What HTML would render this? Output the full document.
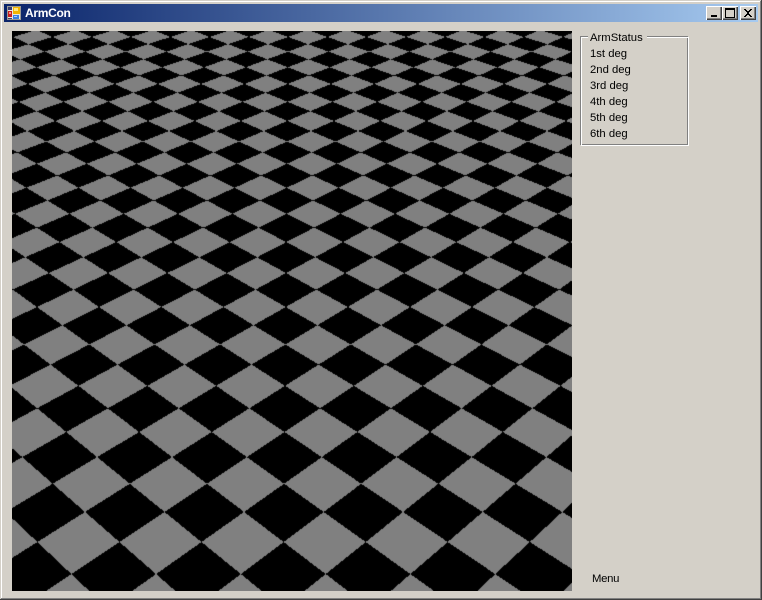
<!DOCTYPE html>
<html>
<head>
<meta charset="utf-8">
<title>ArmCon</title>
<style>
html,body{margin:0;padding:0;width:762px;height:600px;overflow:hidden;background:#d4d0c8}
#win{position:relative;width:762px;height:600px;background:#d4d0c8;overflow:hidden;font-family:"Liberation Sans",sans-serif;color:#000}
.a{position:absolute}
.t{position:absolute;font-size:11.3px;line-height:14px;white-space:nowrap}
.btn{position:absolute;top:6px;width:16px;height:14px;background:#d4d0c8;box-sizing:border-box;box-shadow:inset 1px 1px 0 #fff,inset -1px -1px 0 #404040,inset -2px -2px 0 #808080}
.btn svg{position:absolute;left:0;top:0}
</style>
</head>
<body>
<div id="win">
  <div class="a" style="left:1px;top:1px;width:760px;height:1px;background:#fff"></div>
  <div class="a" style="left:1px;top:1px;width:1px;height:597px;background:#fff"></div>
  <div class="a" style="left:760px;top:1px;width:1px;height:598px;background:#808080"></div>
  <div class="a" style="left:761px;top:0;width:1px;height:600px;background:#404040"></div>
  <div class="a" style="left:1px;top:598px;width:760px;height:1px;background:#808080"></div>
  <div class="a" style="left:0;top:599px;width:762px;height:1px;background:#404040"></div>

  <div class="a" style="left:4px;top:4px;width:754px;height:18px;background:linear-gradient(to right,#0a246a,#a6caf0)"></div>
  <svg class="a" style="left:7px;top:6px" width="14" height="14" viewBox="0 0 14 14" shape-rendering="crispEdges">
    <rect width="14" height="14" fill="#9a9a94"/>
    <rect x="1" y="1" width="12" height="12" fill="#e8e6e0"/>
    <rect x="1" y="1" width="4" height="3" fill="#3a3f6e"/>
    <rect x="6" y="1" width="7" height="7" fill="#f2b400"/>
    <rect x="7" y="2" width="4" height="3" fill="#ffe680"/>
    <rect x="1" y="5" width="4" height="6" fill="#c81e1e"/>
    <rect x="2" y="6" width="2" height="2" fill="#f09090"/>
    <rect x="6" y="9" width="6" height="4" fill="#3a7fe0"/>
    <rect x="7" y="10" width="3" height="1" fill="#a6d0ff"/>
    <rect x="1" y="12" width="4" height="1" fill="#3a3f6e"/>
  </svg>
  <div class="a" style="left:25px;top:6px;font-size:12px;font-weight:bold;line-height:15px;color:#fff;white-space:nowrap;letter-spacing:-0.3px">ArmCon</div>

  <div class="btn" style="left:706px"><svg width="16" height="14" shape-rendering="crispEdges"><rect x="5" y="9" width="6" height="2" fill="#000"/></svg></div>
  <div class="btn" style="left:722px"><svg width="16" height="14" shape-rendering="crispEdges"><path d="M3 2h10v10H3zM4 4v7h8V4z" fill="#000" fill-rule="evenodd"/></svg></div>
  <div class="btn" style="left:740px"><svg width="16" height="14" shape-rendering="crispEdges"><path d="M4 3h2v1h1v1h2V4h1V3h2v1h-1v1h-1v1H9v2h1v1h1v1h1v1h-2v-1H9V9H7v1H6v1H4v-1h1V9h1V8h1V6H6V5H5V4H4z" fill="#000"/></svg></div>

  <canvas id="c" class="a" width="560" height="560" style="left:12px;top:31px;background:#000"></canvas>

  <div class="a" style="left:580px;top:36px;width:108px;height:109px;box-sizing:border-box;border:1px solid #808080"></div>
  <div class="a" style="left:581px;top:37px;width:108px;height:109px;box-sizing:border-box;border:1px solid #fff"></div>
  <div class="a" style="left:588px;top:34px;width:59px;height:6px;background:#d4d0c8"></div>
  <div class="t" style="left:590px;top:31px">ArmStatus</div>
  <div class="t" style="left:590px;top:47px">1st deg</div>
  <div class="t" style="left:590px;top:63px">2nd deg</div>
  <div class="t" style="left:590px;top:79px">3rd deg</div>
  <div class="t" style="left:590px;top:95px">4th deg</div>
  <div class="t" style="left:590px;top:111px">5th deg</div>
  <div class="t" style="left:590px;top:127px">6th deg</div>
  <div class="t" style="left:592px;top:572px;letter-spacing:-0.3px">Menu</div>
</div>
<script>
(function(){
  var cv=document.getElementById('c'),ctx=cv.getContext('2d');
  var W=560,H=560,im=ctx.createImageData(W,H),d=im.data;
  var Hh=427,k=0.0847,a=1.1311e-3,b=3.3042e-5,g0=1.297,g1=-0.6140;
  for(var py=0;py<H;py++){
    var y=py+31.5,r=(a-1/(y+Hh))/b,s=k*(y+Hh),g=g0+g1*r;
    for(var px=0;px<W;px++){
      var x=px+12.5,u=x/s-g,v=r-u;
      var on=((Math.floor(u)+Math.floor(v))%2+2)%2===0;
      var i=(py*W+px)*4,c=on?128:0;
      d[i]=c;d[i+1]=c;d[i+2]=c;d[i+3]=255;
    }
  }
  ctx.putImageData(im,0,0);
})();
</script>
</body>
</html>
